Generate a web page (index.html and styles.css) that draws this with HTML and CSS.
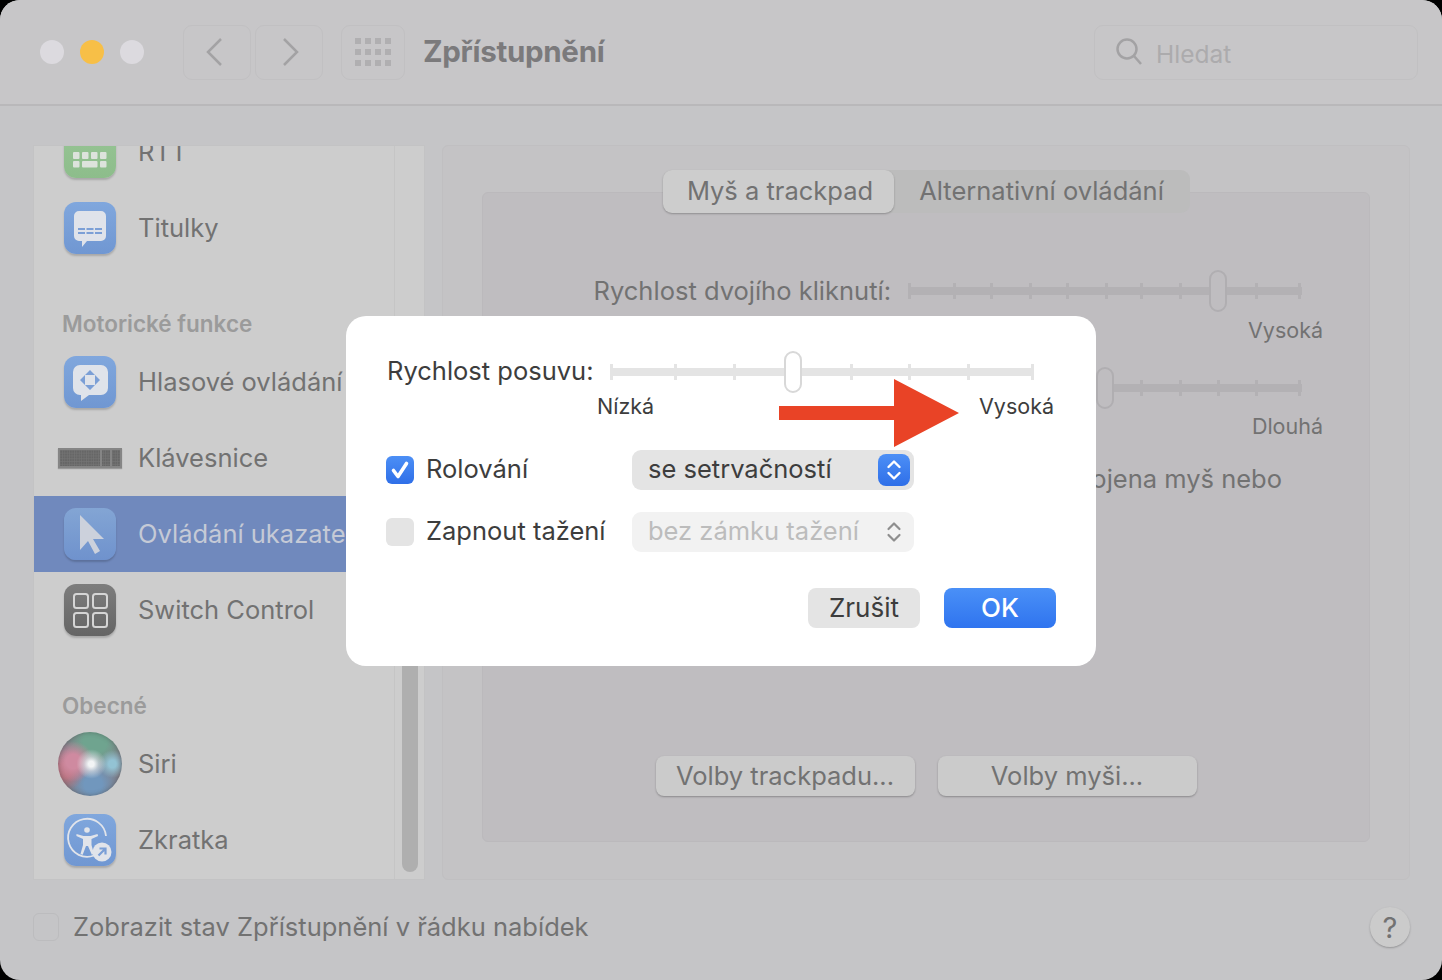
FILE: index.html
```html
<!DOCTYPE html>
<html lang="cs">
<head>
  <meta charset="UTF-8">
  <title>Zpřístupnění</title>
  <link rel="stylesheet" href="styles.css">
</head>
<body>

  <div class="window">
    <header class="toolbar">
      <div class="lights">
        <span class="light"></span>
        <span class="light light-min"></span>
        <span class="light"></span>
      </div>
      <div class="nav">
        <span class="tool-btn tool-back"><svg width="20" height="30" viewBox="0 0 20 30"><path d="M17 2 4 15l13 13"/></svg></span>
        <span class="tool-btn tool-next"><svg width="20" height="30" viewBox="0 0 20 30"><path d="M3 2l13 13L3 28"/></svg></span>
      </div>
      <span class="tool-btn tool-grid">
        <svg width="36" height="28" viewBox="0 0 36 28">
          <g class="grid-dots">
            <rect x="0" y="0" width="6" height="6"/><rect x="10" y="0" width="6" height="6"/><rect x="20" y="0" width="6" height="6"/><rect x="30" y="0" width="6" height="6"/>
            <rect x="0" y="11" width="6" height="6"/><rect x="10" y="11" width="6" height="6"/><rect x="20" y="11" width="6" height="6"/><rect x="30" y="11" width="6" height="6"/>
            <rect x="0" y="22" width="6" height="6"/><rect x="10" y="22" width="6" height="6"/><rect x="20" y="22" width="6" height="6"/><rect x="30" y="22" width="6" height="6"/>
          </g>
        </svg>
      </span>
      <h1 class="title">Zpřístupnění</h1>
      <div class="search">
        <svg width="26" height="28" viewBox="0 0 26 28"><circle cx="11" cy="11" r="9.5"/><path d="M18 18l7 8"/></svg>
        <span class="search-text">Hledat</span>
      </div>
    </header>

    <div class="content">
      <aside class="sidebar">
        <div class="side-list">
          <div class="side-item">
            <span class="app-icon icon-green">
              <svg width="52" height="52" viewBox="0 0 52 52" fill="#dde3dc">
                <path d="M6 14h9l-1 4a3 3 0 0 1-3 2H9a3 3 0 0 1-3-2zM34 14h12v4a3 3 0 0 1-3 2h-6a3 3 0 0 1-3-2z"/>
                <rect x="9" y="26" width="6.500" height="7" rx="1"/><rect x="18" y="26" width="6.500" height="7" rx="1"/><rect x="27" y="26" width="6.500" height="7" rx="1"/><rect x="36" y="26" width="6.500" height="7" rx="1"/>
                <rect x="9" y="35" width="6.500" height="6.500" rx="1"/><rect x="18" y="35" width="15.500" height="6.500" rx="1"/><rect x="36" y="35" width="6.500" height="6.500" rx="1"/>
              </svg>
            </span>
            <span>RTT</span>
          </div>
          <div class="side-item">
            <span class="app-icon icon-blue">
              <svg width="52" height="52" viewBox="0 0 52 52">
                <path d="M15 9h22a5 5 0 0 1 5 5v20a5 5 0 0 1-5 5H23l-5 6v-6h-3a5 5 0 0 1-5-5V14a5 5 0 0 1 5-5z" fill="#dfe3ea"/>
                <path d="M14 27h24M14 31h24" stroke="#7b9fd6" stroke-width="2" stroke-dasharray="7 1.5"/>
              </svg>
            </span>
            <span>Titulky</span>
          </div>

          <div class="side-section">Motorické funkce</div>
          <div class="side-item">
            <span class="app-icon icon-blue">
              <svg width="52" height="52" viewBox="0 0 52 52">
                <path d="M16 9h21a7 7 0 0 1 7 7v16a7 7 0 0 1-7 7H25l-8 6v-6h-1a7 7 0 0 1-7-7V16a7 7 0 0 1 7-7z" fill="#dfe3ea"/>
                <path d="M26 14l5 5H21zM26 34l5-5H21zM16 24l5-5v10zM36 24l-5-5v10z" fill="#7b9fd6"/>
              </svg>
            </span>
            <span>Hlasové ovládání</span>
          </div>
          <div class="side-item">
            <svg class="kbd-icon" width="64" height="20" viewBox="0 0 64 20">
              <defs>
                <pattern id="kbd-keys" width="2.400" height="2.800" patternUnits="userSpaceOnUse">
                  <rect width="2.400" height="2.800" fill="#757575"/>
                  <rect width="1.800" height="2.200" fill="#666"/>
                </pattern>
              </defs>
              <rect width="64" height="20" fill="#858585"/>
              <rect x="2" y="2" width="40" height="16" fill="url(#kbd-keys)"/>
              <rect x="44" y="2" width="8" height="16" fill="url(#kbd-keys)"/>
              <rect x="54" y="2" width="8" height="16" fill="url(#kbd-keys)"/>
            </svg>
            <span>Klávesnice</span>
          </div>
          <div class="side-item side-item-active">
            <span class="app-icon icon-pointer">
              <svg width="52" height="52" viewBox="0 0 52 52"><path d="M16 7v35l8-9 7 13 5-3-7-12h11z" fill="#ccd1dc"/></svg>
            </span>
            <span>Ovládání ukazatele</span>
          </div>
          <div class="side-item">
            <span class="app-icon icon-gray">
              <svg width="52" height="52" viewBox="0 0 52 52" fill="none" stroke="#d5d5d5" stroke-width="2">
                <rect x="10" y="10" width="14" height="14" rx="2.500"/><rect x="29" y="10" width="14" height="14" rx="2.500"/>
                <rect x="10" y="29" width="14" height="14" rx="2.500"/><rect x="29" y="29" width="14" height="14" rx="2.500"/>
              </svg>
            </span>
            <span>Switch Control</span>
          </div>

          <div class="side-section">Obecné</div>
          <div class="side-item">
            <span class="siri-icon"></span>
            <span>Siri</span>
          </div>
          <div class="side-item">
            <span class="app-icon icon-blue">
              <svg width="52" height="52" viewBox="0 0 52 52">
                <path d="M30 41.500A19 19 0 1 1 42 22" fill="none" stroke="#e1e4ea" stroke-width="1.800"/>
                <circle cx="23" cy="16" r="2.800" fill="#e1e4ea"/>
                <path d="M12.500 20l7 2h7l7-2 .6 2-6.600 3v6l2.500 9-2.200 .8L24 32h-2l-3.300 8.800-2.200-.8 2.500-9v-6l-6.600-3z" fill="#e1e4ea"/>
                <circle cx="38" cy="38" r="9.500" fill="#e1e4ea"/>
                <path d="M34.500 41.500l7-7M35.500 34.500h6v6" fill="none" stroke="#7b9fd6" stroke-width="2.200"/>
              </svg>
            </span>
            <span>Zkratka</span>
          </div>
        </div>
        <div class="side-scroll"><span class="scroll-thumb"></span></div>
      </aside>

      <section class="panel">
        <div class="tabs">
          <span class="tab tab-active">Myš a trackpad</span>
          <span class="tab">Alternativní ovládání</span>
        </div>
        <div class="panel-inner">
          <div class="slider-row">
            <span class="slider-label">Rychlost dvojího kliknutí:</span>
            <div class="slider slider-back">
              <i class="tick" style="left:0"></i><i class="tick" style="left:11.300%"></i><i class="tick" style="left:20.900%"></i><i class="tick" style="left:30.600%"></i><i class="tick" style="left:40.200%"></i><i class="tick" style="left:49.900%"></i><i class="tick" style="left:59%"></i><i class="tick" style="left:68.700%"></i><i class="tick" style="left:88%"></i><i class="tick" style="left:99.100%"></i>
              <b class="thumb" style="left:76.400%"></b>
            </div>
          </div>
          <div class="slider-end">Vysoká</div>
          <div class="slider-row slider-row-second">
            <div class="slider slider-back">
              <i class="tick" style="left:59%"></i><i class="tick" style="left:68.700%"></i><i class="tick" style="left:78.300%"></i><i class="tick" style="left:88%"></i><i class="tick" style="left:99.100%"></i>
              <b class="thumb" style="left:47.700%"></b>
            </div>
          </div>
          <div class="slider-end slider-end-second">Dlouhá</div>
          <p class="panel-note">Ignorovat, je-li připojena myš nebo</p>
          <div class="panel-buttons">
            <span class="btn-back">Volby trackpadu...</span>
            <span class="btn-back">Volby myši...</span>
          </div>
        </div>
      </section>
    </div>

    <footer class="footer">
      <span class="foot-check"></span>
      <span class="foot-text">Zobrazit stav Zpřístupnění v řádku nabídek</span>
      <span class="help">?</span>
    </footer>

    <div class="dialog">
      <div class="dlg-speed">
        <span class="dlg-label">Rychlost posuvu:</span>
        <div class="slider slider-front">
          <i class="tick" style="left:0"></i><i class="tick" style="left:15.200%"></i><i class="tick" style="left:28.900%"></i><i class="tick" style="left:56.700%"></i><i class="tick" style="left:70.400%"></i><i class="tick" style="left:84.100%"></i><i class="tick" style="left:99.200%"></i>
          <b class="thumb" style="left:41%"></b>
        </div>
      </div>
      <div class="dlg-ends">
        <span>Nízká</span>
        <span>Vysoká</span>
      </div>
      <div class="dlg-row dlg-row-first">
        <div class="dlg-option">
          <span class="check check-on"><svg width="28" height="28" viewBox="0 0 28 28"><path d="M7.500 14.500l4.500 6 8.500-13" fill="none" stroke="#fff" stroke-width="3.600" stroke-linecap="round" stroke-linejoin="round"/></svg></span>
          <span class="dlg-text">Rolování</span>
        </div>
        <div class="select">
          <span>se setrvačností</span>
          <span class="stepper"><svg width="18" height="26" viewBox="0 0 18 26"><path d="M3.500 10 9 4.500l5.500 5.500M3.500 16l5.500 5.500 5.500-5.500" fill="none" stroke="#fff" stroke-width="2.400" stroke-linecap="round" stroke-linejoin="round"/></svg></span>
        </div>
      </div>
      <div class="dlg-row">
        <div class="dlg-option">
          <span class="check"></span>
          <span class="dlg-text">Zapnout tažení</span>
        </div>
        <div class="select select-off">
          <span>bez zámku tažení</span>
          <span class="stepper"><svg width="18" height="26" viewBox="0 0 18 26"><path d="M3.500 10 9 4.500l5.500 5.500M3.500 16l5.500 5.500 5.500-5.500" fill="none" stroke="#8e8e8e" stroke-width="2.200" stroke-linecap="round" stroke-linejoin="round"/></svg></span>
        </div>
      </div>
      <div class="dlg-buttons">
        <span class="btn">Zrušit</span>
        <span class="btn btn-primary">OK</span>
      </div>
      <svg class="arrow" width="180" height="68" viewBox="0 0 180 68"><path d="M0 27h115V0l65 34-65 34V41H0z" fill="#e94326"/></svg>
    </div>
  </div>

</body>
</html>
```

FILE: styles.css
```css
/* === Reset === */
*, *::before, *::after { box-sizing: border-box; }
html, body { height: 100%; }
body {
  background: #000;
  color: #727272;
  font-family: Inter, "Noto Sans", sans-serif;
  font-size: 25.5px;
  margin: 0;
  overflow: hidden;
}

/* === Window === */
.window {
  background: #c5c5c7;
  border-radius: 20px;
  display: flex;
  flex-direction: column;
  height: 980px;
  overflow: hidden;
  position: relative;
  width: 1442px;
}

/* === Toolbar === */
.toolbar {
  align-items: center;
  background: #c7c6c8;
  border-bottom: 2px solid #b9b8ba;
  display: flex;
  flex: none;
  height: 106px;
  padding: 0 24px 0 40px;
}
.lights { display: flex; gap: 16px; margin-right: 39px; }
.light {
  background: #dcdadf;
  border-radius: 50%;
  height: 24px;
  width: 24px;
}
.light-min { background: #f7bf47; }
.nav { display: flex; gap: 4px; margin-right: 18px; }
.tool-btn {
  align-items: center;
  border: 1px solid #c1c0c2;
  border-radius: 9px;
  display: flex;
  height: 55px;
  justify-content: center;
  width: 68px;
}
.tool-btn svg path { fill: none; stroke: #a3a2a4; stroke-width: 2.500; }
.tool-back svg { margin-right: 6px; }
.tool-next svg { margin-left: 4px; }
.tool-grid { margin-right: 18px; width: 64px; }
.grid-dots rect { fill: #b0afb1; }
.title {
  color: #7b7a7c;
  font-size: 29.5px;
  font-weight: 700;
  letter-spacing: -.3px;
  margin: -2px 0 0;
}
.search {
  align-items: center;
  border: 1px solid #c1c0c2;
  border-radius: 9px;
  color: #acabad;
  display: flex;
  font-size: 24.5px;
  gap: 14px;
  height: 55px;
  margin-left: auto;
  padding-left: 21px;
  width: 324px;
}
.search svg { fill: none; stroke: #a3a2a4; stroke-width: 2.500; }
.search-text { margin-top: 3px; }

/* === Content === */
.content {
  display: flex;
  flex: none;
  gap: 17px;
  height: 735px;
  margin-top: 39px;
  padding: 0 32px 0 33px;
}
.sidebar {
  background: #cdcdcd;
  border: 1px solid #c3c3c4;
  display: flex;
  flex: none;
  overflow: hidden;
  width: 392px;
}
.side-list {
  flex: 1;
  margin-top: -32px;
  min-width: 0;
}
.side-item {
  align-items: center;
  display: flex;
  gap: 22px;
  height: 76px;
  overflow: hidden;
  padding-left: 30px;
  white-space: nowrap;
}
.side-item > span:last-child { margin-top: -2px; }
.side-item-active { background: #7089bd; color: #c5cad6; }
.side-section {
  align-items: flex-end;
  color: #9b9b9b;
  display: flex;
  font-size: 22.5px;
  font-weight: 600;
  height: 78px;
  padding: 0 0 7px 28px;
}
.app-icon {
  border-radius: 12px;
  box-shadow: 0 2px 2px rgba(0, 0, 0, .18);
  display: block;
  flex: none;
  height: 52px;
  width: 52px;
}
.app-icon svg { display: block; }
.icon-green { background: linear-gradient(#98c595, #8dbd8b); }
.icon-blue { background: linear-gradient(#80a7dd, #7097d2); }
.icon-pointer { background: linear-gradient(#83a5d4, #6f92cd); }
.icon-gray { background: linear-gradient(#7d7d7d, #656565); }
.kbd-icon {
  box-shadow: 0 1px 1px rgba(0, 0, 0, .25);
  display: block;
  flex: none;
  margin: 0 -6px;
}
.siri-icon {
  background:
    radial-gradient(circle at 52% 50%, #f2f4f5 0 6%, rgba(225, 230, 235, .6) 16%, transparent 32%),
    radial-gradient(circle at 85% 50%, #93c3d4 0 6%, transparent 22%),
    radial-gradient(circle at 24% 46%, #cf8aa0 0 12%, transparent 34%),
    radial-gradient(circle at 10% 60%, #b9727f 0 10%, transparent 30%),
    radial-gradient(circle at 55% 82%, #7197bd 0 14%, transparent 42%),
    radial-gradient(circle at 58% 14%, #6fa48f 0 18%, transparent 46%),
    #80808a;
  border-radius: 50%;
  box-shadow: inset 0 0 5px rgba(60, 60, 60, .45);
  display: block;
  flex: none;
  height: 64px;
  margin: 0 -6px;
  width: 64px;
}
.side-scroll {
  border-left: 1px solid #c5c5c5;
  flex: none;
  padding: 0 6px 0 7px;
  width: 30px;
}
.scroll-thumb {
  background: #afafaf;
  border-radius: 8px;
  display: block;
  height: 227px;
  margin-top: 499px;
  width: 16px;
}

/* === Panel === */
.panel {
  background: #c4c3c5;
  border: 1px solid #c0bfc1;
  border-radius: 6px;
  display: flex;
  flex: 1;
  flex-direction: column;
  padding: 24px 39px 37px;
}
.tabs {
  align-self: center;
  background: #bcbcbc;
  border-radius: 9px;
  display: flex;
  height: 43px;
  margin-bottom: -21px;
  position: relative;
  z-index: 1;
}
.tab {
  align-items: center;
  display: flex;
  justify-content: center;
  padding-bottom: 2px;
  width: 296px;
}
.tab-active {
  background: #cdcdcd;
  border-radius: 9px;
  box-shadow: 0 1px 2px rgba(0, 0, 0, .25);
  padding-left: 4px;
  width: 231px;
}
.panel-inner {
  background: #bfbdc0;
  border: 1px solid #bbb9bc;
  border-radius: 6px;
  display: flex;
  flex: 1;
  flex-direction: column;
  padding: 77px 67px 45px 0;
}
.slider-row {
  align-items: center;
  display: flex;
  justify-content: flex-end;
}
.slider-row-second { margin-top: 25px; }
.slider-label { margin: 0 17px 2px 0; white-space: nowrap; }
.slider {
  flex: none;
  height: 42px;
  position: relative;
}
.slider::before {
  content: "";
  height: 8px;
  left: 0;
  position: absolute;
  right: 0;
  top: 17px;
}
.tick {
  height: 16px;
  position: absolute;
  top: 13px;
  width: 3px;
}
.thumb {
  border-radius: 9px;
  height: 42px;
  position: absolute;
  top: 0;
  width: 18px;
}
.slider-back { width: 394px; }
.slider-back::before, .slider-back .tick { background: #b3b1b4; }
.slider-back .thumb { background: #bfbdc0; border: 2px solid #b0aeb1; }
.slider-end {
  font-size: 21.5px;
  line-height: 24px;
  margin: 6px -21px 0 0;
  text-align: right;
}
.slider-end-second { margin-top: 5px; }
.panel-note {
  line-height: 28px;
  margin: 27px 20px 0 0;
  text-align: right;
  white-space: nowrap;
}
.panel-buttons {
  display: flex;
  gap: 23px;
  justify-content: center;
  margin: auto -67px 0 0;
}
.btn-back {
  align-items: center;
  background: #cbcbcb;
  border-radius: 8px;
  box-shadow: 0 1px 2px rgba(0, 0, 0, .28);
  display: flex;
  height: 40px;
  justify-content: center;
  padding-bottom: 2px;
  width: 259px;
}

/* === Footer === */
.footer {
  align-items: center;
  display: flex;
  flex: 1;
  gap: 14px;
  padding: 14px 32px 20px 33px;
}
.foot-check {
  border: 1px solid #bcbcbe;
  border-radius: 6px;
  height: 28px;
  width: 26px;
}
.foot-text { margin-top: -2px; white-space: nowrap; }
.help {
  align-items: center;
  background: #cbcbcb;
  border-radius: 50%;
  box-shadow: 0 1px 2px rgba(0, 0, 0, .25);
  display: flex;
  font-size: 29px;
  height: 40px;
  justify-content: center;
  margin-left: auto;
  width: 40px;
}

/* === Dialog === */
.dialog {
  background: #fff;
  border-radius: 20px;
  color: #3d3d3d;
  display: flex;
  flex-direction: column;
  height: 350px;
  left: 346px;
  padding: 34px 40px 38px;
  position: absolute;
  top: 316px;
  width: 750px;
  z-index: 2;
}
.dlg-speed { align-items: center; display: flex; height: 43px; }
.dlg-label { margin: 0 0 2px 1px; white-space: nowrap; }
.slider-front { margin-left: auto; margin-right: 22px; width: 424px; }
.slider-front::before, .slider-front .tick { background: #e4e4e4; }
.slider-front .thumb { background: #fff; border: 2px solid #d8d8d8; }
.dlg-ends {
  display: flex;
  font-size: 21.5px;
  justify-content: space-between;
  line-height: 26px;
  margin: 0 2px 0 211px;
}
.dlg-row {
  align-items: center;
  display: flex;
  height: 40px;
  margin-top: 22px;
}
.dlg-row-first { margin-top: 31px; }
.dlg-option {
  align-items: center;
  display: flex;
  flex: none;
  width: 246px;
}
.check {
  background: #e4e4e4;
  border-radius: 6px;
  flex: none;
  height: 28px;
  width: 28px;
}
.check-on { background: linear-gradient(#4c8ff6, #2f6fe8); }
.check svg { display: block; }
.dlg-text { margin: -3px 0 0 12px; white-space: nowrap; }
.select {
  align-items: center;
  background: #e4e4e4;
  border-radius: 9px;
  display: flex;
  height: 40px;
  justify-content: space-between;
  padding: 0 4px 0 16px;
  width: 282px;
}
.select-off { background: #f2f2f2; color: #bcbcbc; }
.select > span:first-child { margin-top: -3px; }
.stepper {
  align-items: center;
  background: linear-gradient(#4c8ff6, #2f6fe8);
  border-radius: 8px;
  display: flex;
  height: 32px;
  justify-content: center;
  width: 32px;
}
.select-off .stepper { background: none; }
.dlg-buttons {
  display: flex;
  gap: 24px;
  justify-content: flex-end;
  margin-top: auto;
}
.btn {
  align-items: center;
  background: #e4e4e4;
  border-radius: 8px;
  display: flex;
  font-size: 26px;
  height: 40px;
  justify-content: center;
  padding-bottom: 2px;
  width: 112px;
}
.btn-primary {
  background: linear-gradient(#4a90f7, #2f74ef);
  color: #fff;
  font-weight: 500;
}
.arrow { left: 433px; position: absolute; top: 63px; }
```
